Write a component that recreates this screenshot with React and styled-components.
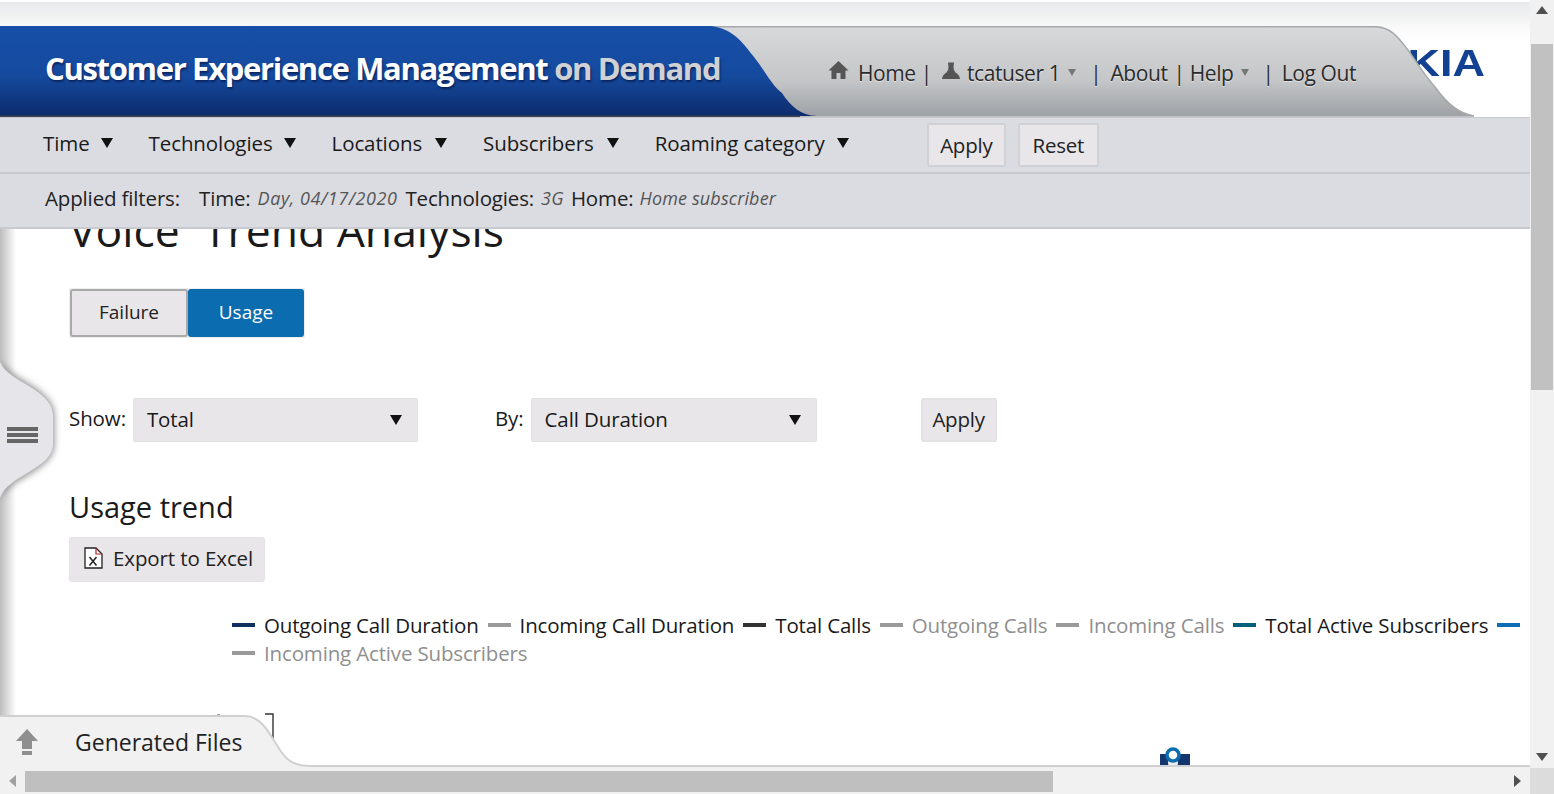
import React from 'react';
import styled, { createGlobalStyle } from 'styled-components';

const Global = createGlobalStyle`
  html, body { margin: 0; padding: 0; height: 100%; overflow: hidden; background: #fff; }
  body { font-family: "Open Sans", "Noto Sans", sans-serif; color: #1a1a1a; }
  * { box-sizing: border-box; }
`;

const Shell = styled.div`
  display: grid;
  grid-template-columns: 1fr 24px;
  grid-template-rows: 1fr 26px;
  width: 1554px;
  height: 794px;
  overflow: hidden;
`;
const Main = styled.div`
  position: relative;
  display: flex;
  flex-direction: column;
  overflow: hidden;
  min-width: 0;
`;
const TopStrip = styled.div`
  height: 26px;
  flex: none;
  background: linear-gradient(#e9eaeb 0, #eeeff0 40%, #f8f8f8 100%);
  border-top: 2px solid #fff;
`;
const Header = styled.header`
  position: relative;
  flex: none;
  height: 91px;
  background: linear-gradient(#f8f8f8 0, #fff 14px);
`;
const HeaderShape = styled.svg`
  position: absolute;
  inset: 0;
  width: 1530px;
  height: 91px;
`;
const Title = styled.h1`
  position: relative;
  margin: 0;
  padding: 21px 0 0 45px;
  font-size: 31px;
  line-height: 42px;
  font-weight: 700;
  letter-spacing: -1.33px;
  color: #fff;
  text-shadow: 1px 2px 2px #0b2560;
  white-space: nowrap;
  span { color: #cfd1d4; }
`;
const UserNav = styled.nav`
  position: absolute;
  left: 828px;
  top: 32px;
  display: flex;
  align-items: center;
  font-size: 21px;
  line-height: 30px;
  letter-spacing: -0.4px;
  color: #2b2b2b;
  text-shadow: 0 1px 1px #e8e8e8;
  white-space: nowrap;
`;
const NavGlyph = styled.svg`
  flex: none;
  margin-right: ${p => p.$mr}px;
  margin-top: -5px;
`;
const NavSep = styled.span`
  margin: 0 ${p => p.$r}px 0 ${p => p.$l}px;
`;
const Caret = styled.span`
  width: 0;
  height: 0;
  margin-left: ${p => p.$ml ?? 8}px;
  margin-top: -2px;
  border-left: 4.5px solid transparent;
  border-right: 4.5px solid transparent;
  border-top: 7px solid #777;
`;
const Logo = styled.div`
  position: absolute;
  left: 1340px;
  top: 15px;
  font-size: 36px;
  line-height: 46px;
  font-weight: 700;
  font-family: "Liberation Sans", sans-serif;
  color: #124191;
  transform: scaleX(1.25);
  transform-origin: left center;
`;
const LogoLayer = styled.div`
  position: absolute;
  inset: 0;
`;
const FilterBar = styled.div`
  flex: none;
  height: 57px;
  display: flex;
  align-items: center;
  padding-left: 43px;
  background: #dbdce1;
  border-top: 1px solid #c9cacf;
  border-bottom: 2px solid #c8cacf;
`;
const FilterItem = styled.div`
  display: flex;
  align-items: center;
  gap: ${p => p.$gap ?? 11}px;
  font-size: 20.5px;
  letter-spacing: -0.1px;
  margin-right: ${p => p.$mr}px;
  margin-top: -5px;
  white-space: nowrap;
`;
const DownArrow = styled.span`
  flex: none;
  width: 0;
  height: 0;
  margin-top: 1px;
  border-left: 6px solid transparent;
  border-right: 6px solid transparent;
  border-top: 10px solid #111;
`;
const Btn = styled.button`
  font: inherit;
  font-size: 20.5px;
  letter-spacing: -0.25px;
  color: #222;
  height: 44px;
  width: ${p => p.$w}px;
  margin-right: ${p => p.$mr ?? 0}px;
  background: #e8e6e8;
  border: 2px solid ${p => p.$soft ? '#e4e2e4' : '#cfd1d6'};
  border-radius: 2px;
  padding: 0 0 ${p => p.$soft ? 3 : 0}px;
`;
const AppliedBar = styled.div`
  flex: none;
  height: 55px;
  display: flex;
  align-items: center;
  padding: 0 0 6px 45px;
  background: #dbdce1;
  border-bottom: 2px solid #c8cacf;
  font-size: 20.5px;
  letter-spacing: -0.15px;
  white-space: nowrap;
  color: #222;
  position: relative;
  z-index: 2;
`;
const AppliedLabel = styled.span`
  margin-right: ${p => p.$mr ?? 8}px;
`;
const AppliedValue = styled.em`
  font-size: 18px;
  color: #555;
  margin-right: ${p => p.$mr ?? 8}px;
  letter-spacing: ${p => p.$ls}px;
`;
const Content = styled.main`
  position: relative;
  flex: 1;
  min-height: 0;
  overflow: hidden;
  padding-left: 69px;
  &::before {
    content: "";
    position: absolute;
    left: 0; top: 0; bottom: 0;
    width: 16px;
    background: linear-gradient(90deg, #bcbcbc, #fff);
  }
`;
const PageTitle = styled.h2`
  margin: -29px 0 0 0;
  font-size: 44.5px;
  line-height: 60px;
  font-weight: 400;
  letter-spacing: 0;
  white-space: nowrap;
`;
const Toggle = styled.div`
  display: flex;
  width: 236px;
  height: 50px;
  margin-top: 28px;
  padding: 1px;
  background: #eee;
`;
const ToggleBtn = styled.button`
  font: inherit;
  font-size: 19px;
  letter-spacing: 0;
  height: 48px;
  width: ${p => p.$w}px;
  padding: 0 0 3px;
  border-radius: 3px;
  color: ${p => p.$on ? '#fff' : '#222'};
  background: ${p => p.$on ? '#0b6cb0' : '#e8e6e8'};
  border: 2px solid ${p => p.$on ? '#0b6cb0' : '#aaa'};
`;
const FormRow = styled.div`
  display: flex;
  align-items: center;
  margin-top: 60px;
  height: 44px;
  font-size: 20.5px;
  letter-spacing: -0.1px;
`;
const RowLabel = styled.span`
  margin-right: 7px;
  margin-top: -5px;
`;
const Select = styled.div`
  display: flex;
  align-items: center;
  justify-content: space-between;
  width: ${p => p.$w}px;
  height: 44px;
  padding: 0 15px 2px 13px;
  margin-right: ${p => p.$mr}px;
  background: #e8e6e8;
  border: 1px solid #e2e0e2;
  border-radius: 2px;
`;
const SubTitle = styled.h3`
  margin: 43px 0 0 0;
  font-size: 29px;
  line-height: 44px;
  font-weight: 400;
  letter-spacing: 0;
`;
const ExportBtn = styled.button`
  display: flex;
  align-items: center;
  gap: 10px;
  font: inherit;
  font-size: 20.5px;
  letter-spacing: -0.1px;
  color: #222;
  margin-top: 8px;
  width: 196px;
  height: 45px;
  padding: 0 0 3px 14px;
  background: #e8e6e8;
  border: 1px solid #e4e2e4;
  border-radius: 3px;
`;
const Legend = styled.div`
  display: flex;
  flex-wrap: wrap;
  align-items: center;
  margin: 29px 0 0 163px;
  width: 1298px;
`;
const LegendItem = styled.div`
  display: flex;
  align-items: center;
  height: 28px;
  margin-right: 9px;
  font-size: 20.5px;
  letter-spacing: -0.16px;
  white-space: nowrap;
  color: ${p => p.$muted ? '#8f8f8f' : '#1a1a1a'};
`;
const Swatch = styled.span`
  width: 23px;
  height: 4px;
  margin-right: ${p => p.$noText ? 0 : 9}px;
  background: ${p => p.$c};
`;
const ChartFragments = styled.svg`
  display: block;
  width: 1461px;
  height: 100px;
  margin-top: 1px;
`;
const SideHandle = styled.svg`
  position: absolute;
  left: 0;
  top: 355px;
  z-index: 3;
`;
const Drawer = styled.div`
  position: absolute;
  left: 0;
  right: 0;
  bottom: 0;
  height: 53px;
  z-index: 4;
`;
const DrawerShape = styled.svg`
  position: absolute;
  inset: 0;
`;
const DrawerIcon = styled.svg`
  position: absolute;
  left: 15px;
  top: 14px;
`;
const DrawerLabel = styled.span`
  position: absolute;
  left: 75px;
  top: 10px;
  font-size: 23px;
  line-height: 34px;
  color: #222;
`;
const VScroll = styled.div`
  position: relative;
  background: #f1f1f1;
  display: flex;
  flex-direction: column;
  align-items: center;
  justify-content: space-between;
  padding: 6px 0 7px;
`;
const VThumb = styled.div`
  position: absolute;
  top: 44px;
  left: 1px;
  width: 22px;
  height: 346px;
  background: #c1c1c1;
`;
const ArrowGlyph = styled.svg`
  display: block;
  flex: none;
`;
const HScroll = styled.div`
  position: relative;
  background: #f1f1f1;
  display: flex;
  align-items: center;
  justify-content: space-between;
  padding: 0 9px;
`;
const HThumb = styled.div`
  position: absolute;
  left: 25px;
  top: 3px;
  width: 1028px;
  height: 21px;
  background: #bfbfbf;
`;
const Corner = styled.div`
  background: #dcdcdc;
`;

const House = () => (
  <NavGlyph $mr={9} width="21" height="21" viewBox="0 0 21 21">
    <path fill="#555" d="M10.5 1 L20.5 10.5 L17.5 10.5 L17.5 19 L12.5 19 L12.5 13 L8.5 13 L8.5 19 L3.5 19 L3.5 10.5 L0.5 10.5 Z" />
  </NavGlyph>
);
const Person = () => (
  <NavGlyph $mr={6} width="20" height="20" viewBox="0 0 20 20">
    <path fill="#555" d="M7 1.5 h6 l-0.5 5 q0 3 2 5 q4 2 4.5 6.5 H1 q0.5 -4.5 4.5 -6.5 q2 -2 2 -5 Z" />
  </NavGlyph>
);

const legendItems = [
  { c: '#12305f', t: 'Outgoing Call Duration' },
  { c: '#9a9a9a', t: 'Incoming Call Duration' },
  { c: '#333', t: 'Total Calls' },
  { c: '#9a9a9a', t: 'Outgoing Calls', m: true },
  { c: '#9a9a9a', t: 'Incoming Calls', m: true },
  { c: '#00627a', t: 'Total Active Subscribers' },
  { c: '#0f6db5', t: '' },
  { c: '#9a9a9a', t: 'Incoming Active Subscribers', m: true },
];

export default function App() {
  return (
    <>
      <Global />
      <Shell>
        <Main>
          <TopStrip />
          <Header>
            <Logo>NOKIA</Logo>
            <LogoLayer>
              <HeaderShape viewBox="0 0 1530 91">
                <defs>
                  <linearGradient id="grey" x1="0" y1="0" x2="0" y2="1">
                    <stop offset="0" stopColor="#d8d9db" />
                    <stop offset="0.6" stopColor="#c4c6c8" />
                    <stop offset="1" stopColor="#9da1a5" />
                  </linearGradient>
                  <linearGradient id="blue" x1="0" y1="0" x2="0" y2="1">
                    <stop offset="0" stopColor="#164fa8" />
                    <stop offset="0.55" stopColor="#154a9e" />
                    <stop offset="1" stopColor="#0d2b6c" />
                  </linearGradient>
                </defs>
                <path fill="url(#grey)" stroke="#a6a8aa" strokeWidth="1.5" d="M700 0.7 H1375 C1392 0.7 1400 14 1408 24 C1418 38 1425 50 1435 61 C1447 78 1460 88 1474 90 H780 Z" />
                <path fill="url(#blue)" d="M0 0 H711 C735 3 745 20 754 31 C765 45 772 60 782 67 C790 80 802 90 817 90 H0 Z" />
                <rect x="0" y="89.5" width="800" height="1.5" fill="#3d4550" />
              </HeaderShape>
              <Title>Customer Experience Management <span>on Demand</span></Title>
              <UserNav>
                <House />
                <span>Home</span>
                <NavSep $l={5} $r={9}>|</NavSep>
                <Person />
                <span>tcatuser 1</span>
                <Caret />
                <NavSep $l={14} $r={9}>|</NavSep>
                <span>About</span>
                <NavSep $l={6} $r={5}>|</NavSep>
                <span>Help</span>
                <Caret $ml={7} />
                <NavSep $l={14} $r={8}>|</NavSep>
                <span>Log Out</span>
              </UserNav>
            </LogoLayer>
          </Header>
          <FilterBar>
            <FilterItem $mr={36}>Time<DownArrow /></FilterItem>
            <FilterItem $mr={36}>Technologies<DownArrow /></FilterItem>
            <FilterItem $mr={36} $gap={13}>Locations<DownArrow /></FilterItem>
            <FilterItem $mr={36} $gap={13}>Subscribers<DownArrow /></FilterItem>
            <FilterItem $mr={78} $gap={12}>Roaming category<DownArrow /></FilterItem>
            <Btn $w={79} $mr={12}>Apply</Btn>
            <Btn $w={81}>Reset</Btn>
          </FilterBar>
          <AppliedBar>
            <AppliedLabel $mr={19}>Applied filters:</AppliedLabel>
            <AppliedLabel $mr={7}>Time:</AppliedLabel>
            <AppliedValue $ls={0.55}>Day, 04/17/2020</AppliedValue>
            <AppliedLabel $mr={7}>Technologies:</AppliedLabel>
            <AppliedValue $ls={0.35} $mr={7}>3G</AppliedValue>
            <AppliedLabel $mr={6}>Home:</AppliedLabel>
            <AppliedValue $ls={0.15}>Home subscriber</AppliedValue>
          </AppliedBar>
          <Content>
            <PageTitle>Voice&nbsp; Trend Analysis</PageTitle>
            <Toggle>
              <ToggleBtn $w={118}>Failure</ToggleBtn>
              <ToggleBtn $w={116} $on>Usage</ToggleBtn>
            </Toggle>
            <FormRow>
              <RowLabel>Show:</RowLabel>
              <Select $w={285} $mr={77}>Total<DownArrow /></Select>
              <RowLabel>By:</RowLabel>
              <Select $w={286} $mr={104}>Call Duration<DownArrow /></Select>
              <Btn $w={76} $soft>Apply</Btn>
            </FormRow>
            <SubTitle>Usage trend</SubTitle>
            <ExportBtn>
              <svg width="19" height="22" viewBox="0 0 19 22">
                <path fill="#fff" stroke="#222" strokeWidth="1.3" d="M1 1 H12 L18 7 V21 H1 Z" />
                <path fill="none" stroke="#a22" strokeWidth="1.2" d="M12 1 V7 H18" />
                <path fill="none" stroke="#222" strokeWidth="1.5" d="M5.5 10 L12.5 18.5 M12.5 10 L5.5 18.5" />
              </svg>
              Export to Excel
            </ExportBtn>
            <Legend>
              {legendItems.map((l, i) => (
                <LegendItem key={i} $muted={l.m}>
                  <Swatch $c={l.c} $noText={!l.t} />
                  {l.t}
                </LegendItem>
              ))}
            </Legend>
            <ChartFragments viewBox="0 0 1461 100">
              <path fill="none" stroke="#333" strokeWidth="1.4" d="M196 46 H204 V72" />
              <path fill="none" stroke="#444" strokeWidth="1.2" d="M143 51 L146 47 M148 47 H151" />
              <rect x="1091" y="86" width="30" height="14" fill="#14366f" />
              <circle cx="1104" cy="95" r="5" fill="#eee" />
              <circle cx="1104" cy="87" r="6" fill="#fff" stroke="#0b6cb0" strokeWidth="3.5" />
            </ChartFragments>
          </Content>
          <SideHandle width="64" height="150" viewBox="0 0 64 150">
            <defs>
              <filter id="sh" x="-30%" y="-10%" width="160%" height="120%">
                <feGaussianBlur stdDeviation="3.5" />
              </filter>
            </defs>
            <path fill="#8c8c8c" filter="url(#sh)" d="M0 5 C8 25 53 32 54 60 V90 C53 116 8 122 0 145 Z" />
            <path fill="#e6e6ea" d="M0 7 C8 27 52 34 53 60 V90 C52 114 8 120 0 143 Z" />
            <rect x="7" y="72" width="31" height="4" fill="#666" />
            <rect x="7" y="78" width="31" height="4" fill="#666" />
            <rect x="7" y="84" width="31" height="4" fill="#666" />
          </SideHandle>
          <Drawer>
            <DrawerShape width="1530" height="53" viewBox="0 0 1530 53">
              <path fill="#f1f1f1" d="M0 53 V1 H245 C262 1 270 20 280 35 C287 46 295 51 310 51 H1530 V53 Z" />
              <path fill="none" stroke="#d0d0d0" strokeWidth="2" d="M0 1 H245 C262 1 270 20 280 35 C287 46 295 51 310 51 H1530" />
            </DrawerShape>
            <DrawerIcon width="24" height="28" viewBox="0 0 24 28">
              <path fill="#8f8f8f" d="M12 0 L23 12 H17 V20 H7 V12 H1 Z" />
              <rect x="7" y="22" width="10" height="4" fill="#8f8f8f" />
            </DrawerIcon>
            <DrawerLabel>Generated Files</DrawerLabel>
          </Drawer>
        </Main>
        <VScroll>
          <VThumb />
          <ArrowGlyph width="12" height="8" viewBox="0 0 12 8"><path fill="#505050" d="M6 0 L12 8 H0 Z" /></ArrowGlyph>
          <ArrowGlyph width="12" height="8" viewBox="0 0 12 8"><path fill="#505050" d="M0 0 H12 L6 8 Z" /></ArrowGlyph>
        </VScroll>
        <HScroll>
          <HThumb />
          <ArrowGlyph width="7" height="12" viewBox="0 0 7 12"><path fill="#a0a0a0" d="M7 0 V12 L0 6 Z" /></ArrowGlyph>
          <ArrowGlyph width="7" height="12" viewBox="0 0 7 12"><path fill="#505050" d="M0 0 L7 6 L0 12 Z" /></ArrowGlyph>
        </HScroll>
        <Corner />
      </Shell>
    </>
  );
}
